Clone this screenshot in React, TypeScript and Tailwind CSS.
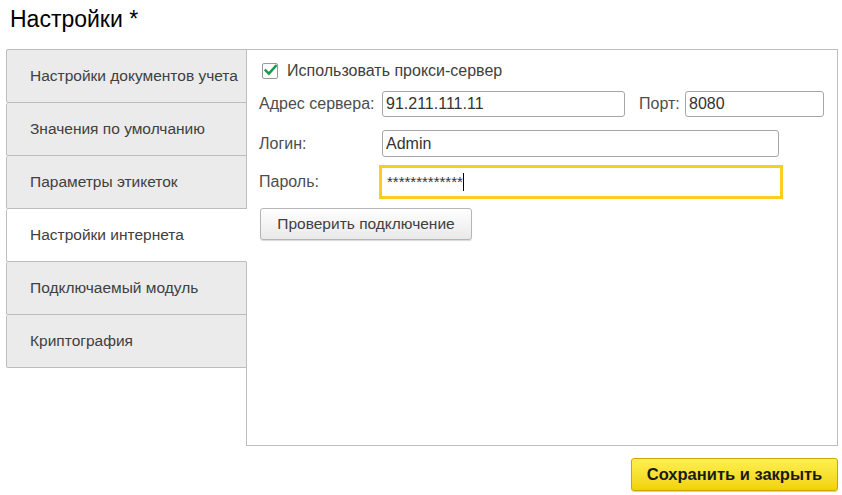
import React from 'react';

const tabs = [
  'Настройки документов учета',
  'Значения по умолчанию',
  'Параметры этикеток',
  'Настройки интернета',
  'Подключаемый модуль',
  'Криптография',
];

const App: React.FC = () => {
  const active = 3;

  return (
    <div
      className="w-[842px] h-[495px] bg-white overflow-hidden"
      style={{ fontFamily: '"Liberation Sans", Arial, sans-serif' }}
    >
      {/* Title */}
      <div className="h-[49px] pl-[10px] pt-[6px] text-[23px] leading-[27px] text-black">
        Настройки *
      </div>

      {/* Body */}
      <div className="flex ml-[6px] mr-[4px] h-[397px]">
        {/* Tabs */}
        <div className="relative z-10 w-[241px] -mr-px flex flex-col">
          {tabs.map((tab, i) => (
            <div
              key={tab}
              className={`flex items-center pl-[23px] text-[15.5px] text-[#404040] border-l border-b border-[#bdbdbd] rounded-l-[2px] ${
                i === 0 ? 'h-[54px] border-t' : 'h-[53px]'
              } ${i === active ? 'bg-white border-r border-r-white' : 'bg-[#ebebeb] border-r'}`}
            >
              {tab}
            </div>
          ))}
        </div>

        {/* Content panel */}
        <div className="flex-1 border border-[#bdbdbd] pl-[12px] flex flex-col text-[16px]">
          {/* Checkbox */}
          <div className="flex items-center h-[22px] mt-[10px] pl-[3px]">
            <div className="w-[16px] h-[16px] border border-[#999] rounded-[2px] bg-white flex items-center justify-center">
              <svg width="16" height="14" viewBox="0 0 16 14" className="-mt-[2px] ml-[1px]">
                <path d="M2 7.5 L6 11.5 L14.5 2" fill="none" stroke="#1b9a48" strokeWidth="3" strokeLinecap="square" />
              </svg>
            </div>
            <span className="ml-[9px] text-[#404040]">Использовать прокси-сервер</span>
          </div>

          {/* Address */}
          <div className="flex items-center mt-[9px] h-[26px]">
            <span className="w-[123px] text-[#4d4d4d]">Адрес сервера:</span>
            <div className="w-[243px] h-[26px] border border-[#a6a6a6] rounded-[3px] flex items-center px-[3px] text-[#333]">
              91.211.111.11
            </div>
            <span className="ml-[14px] w-[46px] text-[#4d4d4d]">Порт:</span>
            <div className="w-[139px] h-[26px] border border-[#a6a6a6] rounded-[3px] flex items-center px-[3px] text-[#333]">
              8080
            </div>
          </div>

          {/* Login */}
          <div className="flex items-center mt-[13px] h-[27px]">
            <span className="w-[123px] text-[#4d4d4d]">Логин:</span>
            <div className="w-[397px] h-[27px] border border-[#a6a6a6] rounded-[3px] flex items-center px-[3px] text-[#333]">
              Admin
            </div>
          </div>

          {/* Password */}
          <div className="flex items-center mt-[8px] h-[34px]">
            <span className="w-[120px] text-[#4d4d4d]">Пароль:</span>
            <div className="w-[404px] h-[34px] border-[3px] border-[#fbcd22] flex items-center px-[5px] text-[15px] text-[#333]">
              <span>*************</span>
              <span className="w-px h-[18px] bg-black" />
            </div>
          </div>

          {/* Check connection */}
          <div className="mt-[9px]">
            <button className="w-[212px] h-[32px] ml-px border border-[#b5b5b5] rounded-[3px] bg-gradient-to-b from-white to-[#e9e9e9] shadow-[0_1px_1px_rgba(0,0,0,0.15)] text-[15.5px] text-[#404040]">
              Проверить подключение
            </button>
          </div>
        </div>
      </div>

      {/* Footer */}
      <div className="flex justify-end mr-[4px] mt-[12px]">
        <button className="w-[207px] h-[33px] border border-[#c9a800] rounded-[3px] bg-gradient-to-b from-[#fff04c] to-[#f1d200] shadow-[0_1px_1px_rgba(0,0,0,0.2)] text-[16.5px] font-bold text-[#1a1a1a]">
          Сохранить и закрыть
        </button>
      </div>
    </div>
  );
};

export default App;
